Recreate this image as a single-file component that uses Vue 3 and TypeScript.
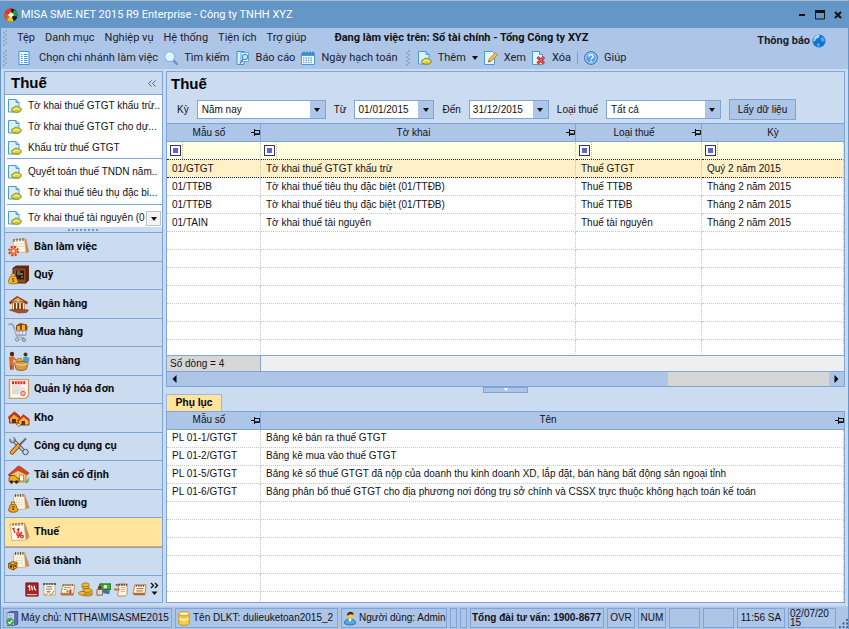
<script setup lang="ts">
import { ref } from 'vue'

interface NavItem { label: string; icon: string }
interface TaxRow { code: string; name: string; kind: string; period: string }
interface Appendix { code: string; name: string }

const menus = ['Tệp', 'Danh mục', 'Nghiệp vụ', 'Hệ thống', 'Tiện ích', 'Trợ giúp']

const taskGroups: string[][] = [
  ['Tờ khai thuế GTGT khấu trừ..', 'Tờ khai thuế GTGT cho dự...', 'Khấu trừ thuế GTGT'],
  ['Quyết toán thuế TNDN năm..', 'Tờ khai thuế tiêu thụ đặc bi...'],
  ['Tờ khai thuế tài nguyên (0'],
]

const navItems: NavItem[] = [
  { label: 'Bàn làm việc', icon: 'desk' },
  { label: 'Quỹ', icon: 'safe' },
  { label: 'Ngân hàng', icon: 'bank' },
  { label: 'Mua hàng', icon: 'cart' },
  { label: 'Bán hàng', icon: 'sell' },
  { label: 'Quản lý hóa đơn', icon: 'invoice' },
  { label: 'Kho', icon: 'stock' },
  { label: 'Công cụ dụng cụ', icon: 'tools' },
  { label: 'Tài sản cố định', icon: 'asset' },
  { label: 'Tiền lương', icon: 'salary' },
  { label: 'Thuế', icon: 'tax' },
  { label: 'Giá thành', icon: 'cost' },
]
const active = ref('Thuế')

const shortcuts = [
  { label: 'Sổ cái', icon: 'ledger' },
  { label: 'Hợp đồng', icon: 'contract' },
  { label: 'Ngân sách', icon: 'chart' },
  { label: 'Cổ đông', icon: 'coins' },
  { label: 'Kho bạc', icon: 'cash' },
  { label: 'Văn bản', icon: 'scroll' },
  { label: 'Tổng hợp', icon: 'card' },
]

const taxHeads = [
  { label: 'Mẫu số', pin: true },
  { label: 'Tờ khai', pin: true },
  { label: 'Loại thuế', pin: true },
  { label: 'Kỳ', pin: false },
]
const taxRows: TaxRow[] = [
  { code: '01/GTGT', name: 'Tờ khai thuế GTGT khấu trừ', kind: 'Thuế GTGT', period: 'Quý 2 năm 2015' },
  { code: '01/TTĐB', name: 'Tờ khai thuế tiêu thụ đặc biệt (01/TTĐB)', kind: 'Thuế TTĐB', period: 'Tháng 2 năm 2015' },
  { code: '01/TTĐB', name: 'Tờ khai thuế tiêu thụ đặc biệt (01/TTĐB)', kind: 'Thuế TTĐB', period: 'Tháng 2 năm 2015' },
  { code: '01/TAIN', name: 'Tờ khai thuế tài nguyên', kind: 'Thuế tài nguyên', period: 'Tháng 2 năm 2015' },
]
const appendices: Appendix[] = [
  { code: 'PL 01-1/GTGT', name: 'Bảng kê bán ra thuế GTGT' },
  { code: 'PL 01-2/GTGT', name: 'Bảng kê mua vào thuế GTGT' },
  { code: 'PL 01-5/GTGT', name: 'Bảng kê số thuế GTGT đã nộp của doanh thu kinh doanh XD, lắp đặt, bán hàng bất động sản ngoại tỉnh' },
  { code: 'PL 01-6/GTGT', name: 'Bảng phân bổ thuế GTGT cho địa phương nơi đóng trụ sở chính và CSSX trực thuộc không hạch toán kế toán' },
]
const selected = ref(0)
const period = ref('Năm nay')
const taxKind = ref('Tất cả')
const from = ref('01/01/2015')
const to = ref('31/12/2015')
</script>

<template>
  <div class="window">
    <svg class="sprite" aria-hidden="true">
      <symbol id="i-logo" viewBox="0 0 16 16">
        <circle cx="8" cy="8" r="7.5" fill="#1d1d1b" />
        <path d="M8 8 1 5A7.500 7.500 0 0 1 8 .5Z" fill="#e23b22" />
        <path d="M8 8 1 5A7.500 7.500 0 0 0 4 14.500Z" fill="#e9541f" />
        <path d="M8 8 3 13.800A7.500 7.500 0 0 0 11 15Z" fill="#f3c21b" />
        <path d="M12 2A7.500 7.500 0 0 1 15 10L8 8Z" fill="#2c9a3f" />
        <path d="m8 4.500 3.500 3.500L8 11.500 4.500 8Z" fill="#fff" />
      </symbol>
      <symbol id="i-page" viewBox="0 0 14 14">
        <path d="M.5.5H8l3 3v9.500H.5Z" fill="#dcf0fc" stroke="#4a9bd2" />
        <path d="M8 .5v3h3" fill="#8cc6ec" stroke="#4a9bd2" />
        <path d="M3.500 10.500c0-1.500 1.300-2 2.300-1.900C6 7 9.500 6.300 10.300 8.300c1.800-.2 3.200 1 3 2.400-.3 2-2.300 2.500-4.800 2.500-2.800 0-5-.7-5-2.700Z" fill="#d8cf3e" stroke="#85821c" stroke-width=".9" />
        <path d="M5.500 10.500c1.500-1 4-1.200 6-.5" stroke="#fbf6a0" stroke-width="1.200" fill="none" />
      </symbol>
      <symbol id="i-branch" viewBox="0 0 14 14">
        <path d="M2 .5h10v13H2Z" fill="#eef8fe" stroke="#3f94d2" />
        <path d="M4 3.500h1.500m1.500 0h3.500M4 5.500h1.500m1.500 0h3.500M4 7.500h1.500m1.500 0h3.500M4 9.500h1.500m1.500 0h3.500M4 11.500h1.500m1.500 0h3.500" stroke="#3f94d2" />
      </symbol>
      <symbol id="i-find" viewBox="0 0 14 14">
        <path d="m9 9 3.800 3.800" stroke="#7387c9" stroke-width="2.400" stroke-linecap="round" />
        <circle cx="5.700" cy="5.700" r="5" fill="#dff3fd" stroke="#7fbde6" stroke-width="1.200" />
        <path d="M3 5a2.800 2.800 0 0 1 3-2.400" stroke="#fff" fill="none" stroke-width="1.300" />
      </symbol>
      <symbol id="i-report" viewBox="0 0 14 14">
        <path d="M1 .5h7v13H1Z" fill="#d8effb" stroke="#3f94d2" />
        <path d="M5 1.500h7.500v9H5Z" fill="#eaf7fe" stroke="#5fabe0" />
        <circle cx="9" cy="6" r="2.800" fill="#bfe2f7" stroke="#3f7fc4" />
        <path d="m7 8-3 4.500" stroke="#6d7fc6" stroke-width="1.600" />
      </symbol>
      <symbol id="i-calendar" viewBox="0 0 14 14">
        <path d="M.5 2h13v11.500H.5Z" fill="#fff" stroke="#429ad6" />
        <path d="M.5 2h13v3H.5Z" fill="#429ad6" />
        <path d="M3 .5v3M6 .5v3M9 .5v3M12 .5v3" stroke="#1f6fb0" />
        <path d="M2 7h10M2 9.300h10M2 11.500h10" stroke="#57a9df" stroke-width="1.400" stroke-dasharray="1.500 1" />
      </symbol>
      <symbol id="i-edit" viewBox="0 0 14 14">
        <path d="M.5.5h8l2 2v11H.5Z" fill="#e7f5fd" stroke="#4a9bd2" />
        <path d="m4.500 11 .7-2.800 6-6.400 2.200 2-6.200 6.400Z" fill="#f6c244" stroke="#a8741c" stroke-width=".8" />
        <path d="m4.500 11 .4-1.600 1.200 1Z" fill="#444" />
      </symbol>
      <symbol id="i-delete" viewBox="0 0 14 14">
        <path d="M.5.5h7l3 3v10H.5Z" fill="#e7f5fd" stroke="#4a9bd2" />
        <path d="M7.500.5v3h3" fill="#a9d7f3" stroke="#4a9bd2" />
        <path d="m5.500 6 6.500 6.500M12 6l-6.500 6.500" stroke="#a42a2a" stroke-width="3" />
        <path d="m5.700 6.200 6 6M11.700 6.200l-6 6" stroke="#ea5a55" stroke-width="1.500" />
      </symbol>
      <symbol id="i-help" viewBox="0 0 14 14">
        <circle cx="7" cy="7" r="6.300" fill="#5b9fe8" stroke="#2b62b0" />
        <circle cx="7" cy="7" r="5.200" fill="none" stroke="#cfe5fa" stroke-width=".9" />
        <path d="M5 5.600c0-2.600 4.200-2.500 4.100 0C9 7 7.100 7 7.100 8.500M7.100 9.700V11" stroke="#fff" stroke-width="1.400" fill="none" />
      </symbol>
      <symbol id="i-globe" viewBox="0 0 14 14">
        <circle cx="7" cy="7" r="6.500" fill="#1670cf" />
        <path d="M2 3.500C4 1 7 .800 8 1.500L6.500 4 4 5 3 7.500 1 7Z" fill="#8fd3f8" />
        <path d="m9 3 3 .8 1 3L10 8 8.500 6ZM5 9l3 1-1 3-2-1Z" fill="#4ba6ea" />
        <path d="M3 3.500a5 5 0 0 1 4-2" stroke="#e4f6ff" fill="none" />
      </symbol>
      <symbol id="i-pin" viewBox="0 0 9 7">
        <path d="M0 3.500h3M3.500 0v7M4 1.500h4.500v4H4M4 4.800h4.500" stroke="#111" fill="none" />
      </symbol>

      <symbol id="i-desk" viewBox="0 0 22 20">
        <path d="m4 3 14-1.500L21 15l-3 1Z" fill="#c58b4b" />
        <path d="M5 3 16.500 2 18 15 6 16Z" fill="#fdf6e6" stroke="#c9a77a" stroke-width=".7" />
        <path d="M6 2v3M9 1.500v3M12 1.300v3M15 1v3" stroke="#5b4a3a" />
        <path d="M8 7h8M8 9.500h8" stroke="#d8c3a2" stroke-dasharray="1.500 1" />
        <circle cx="5.500" cy="14" r="4.200" fill="none" stroke="#e5351c" stroke-width="2.400" stroke-dasharray="2 1.300" />
        <circle cx="5.500" cy="14" r="3" fill="#f26a2c" />
        <circle cx="5.500" cy="14" r="1.500" fill="#ffe9b0" />
      </symbol>
      <symbol id="i-safe" viewBox="0 0 22 20">
        <path d="m5 3 3-2.500h13v15L18 18Z" fill="#5f2c17" />
        <path d="M5 3h13v15H5Z" fill="#8f4a28" stroke="#54230f" />
        <path d="M8 5.500h8v9H8Z" fill="#2b1a15" />
        <path d="M9 9h6M9 7h3m1 5h2" stroke="#c4b07d" />
        <path d="M2 11.500c1-1 5-1 6 0l2 5.500c0 2.500-10 2.500-10 0Z" fill="#eeb72a" stroke="#94630c" stroke-width=".7" />
        <path d="m3 9 4 0-1 2.500H4Z" fill="#f8d568" stroke="#94630c" stroke-width=".6" />
        <path d="M6.500 14c-2-1.500-3 .5-1.500 1s1.500 2-.8 1.500" stroke="#6b3a08" fill="none" />
      </symbol>
      <symbol id="i-bank" viewBox="0 0 22 20">
        <path d="M1 8 9 2l11 6-1 2.500L9.500 6 2 10.500Z" fill="#96401d" />
        <path d="m2.500 8 7-5 8.500 5Z" fill="#d99a5a" stroke="#7b3415" stroke-width=".7" />
        <path d="M4 9h13v7H4Z" fill="#c98549" />
        <path d="M5.500 9v7M8.500 9v7M12 9v7M15.500 9v7" stroke="#fff0cf" stroke-width="1.200" />
        <path d="M7 9v7M10.300 9v7M13.800 9v7" stroke="#6d3217" stroke-width="1.500" />
        <path d="m1.500 16 8-1 11 1-2 2.500-8 .5Z" fill="#a0522b" stroke="#6d3217" stroke-width=".6" />
        <circle cx="9.800" cy="6.400" r="1.200" fill="#f6d55b" />
      </symbol>
      <symbol id="i-cart" viewBox="0 0 22 20">
        <path d="M.5 3c2-2 4-1 5 1l3 9h9l2-9" fill="none" stroke="#8b97a8" stroke-width="1.400" />
        <path d="M6.500 7 8.500 12.500h9L19 7Z" fill="#e4e9f0" stroke="#a9b4c4" />
        <path d="M7.500 9.500h11M11 7v5M14.500 7v5" stroke="#a9b4c4" />
        <path d="M8 3.500 12 1l7 1.500v6H8Z" fill="#8a4b18" />
        <path d="M9 4h3v4H9ZM14 3h3v5h-3Z" fill="#f2b22c" />
        <path d="m8 14 8 2-7 2.500" fill="none" stroke="#9aa6b6" />
        <circle cx="9" cy="17.500" r="1.600" fill="#dde3ea" stroke="#6f7b8d" />
        <circle cx="16" cy="18" r="1.500" fill="#dde3ea" stroke="#6f7b8d" />
      </symbol>
      <symbol id="i-sell" viewBox="0 0 22 20">
        <circle cx="4" cy="3" r="2.200" fill="#4a2a18" />
        <path d="m1 6 4-1 4 4-1 1-3-1.500L6 14v5l-4-1Z" fill="#e0692b" />
        <path d="M3 14v5" stroke="#7f2d14" />
        <circle cx="17.500" cy="3.500" r="2" fill="#503220" />
        <path d="m15 6.500 4-1 2.500 2L20 13h-4l-4-2 3-1.500Z" fill="#4e9fc7" />
        <path d="M6.500 12c3-2.500 11-2 13.500 0l-1.500 6c-3 2-8 2-10.500 0Z" fill="#d79b45" stroke="#87541a" stroke-width=".8" />
        <path d="M7 12.500c3 2 10 2 13 0" stroke="#ffe0a0" fill="none" />
        <path d="m9 8 4-1 1 3.500H9Z" fill="#edb321" stroke="#8a5d12" stroke-width=".6" />
      </symbol>
      <symbol id="i-invoice" viewBox="0 0 22 20">
        <path d="M1.500.5h19v16l-3 3h-16Z" fill="#fffaf2" stroke="#d29b5e" stroke-width="1.400" />
        <path d="M4 3.800h14" stroke="#e1251b" stroke-width="3" stroke-dasharray="2 .8" />
        <path d="M4 7h9M4 9h13M4 11h13M4 13h8" stroke="#c2bfba" stroke-width=".8" />
        <path d="M4 10.500h7v5H4Z" fill="#dddbd8" />
        <circle cx="15" cy="14.500" r="2.300" fill="#f5b5a8" stroke="#df5b4b" />
      </symbol>
      <symbol id="i-stock" viewBox="0 0 22 20">
        <path d="m.5 9 6-5 5 4v7H1.500V9.500Z" fill="#e7a92e" stroke="#6b1d0d" stroke-width=".8" />
        <path d="m0 10 6-6 6 5-1 1.500-5-4-5 5Z" fill="#cc2c1b" />
        <path d="m10 12 5.500-5L21 11v6H11Z" fill="#f2bd43" stroke="#6b1d0d" stroke-width=".8" />
        <path d="m9 12.500 6.500-6 6 5-1 1.500-5-4-5.500 5Z" fill="#d9311e" />
        <path d="M4 11h4v4H4ZM13.500 13h3.500v4h-3.500Z" fill="#613314" />
        <path d="m8 16 3-1 2 2-2 1.500Z" fill="#fbdc6b" stroke="#614214" stroke-width=".6" />
      </symbol>
      <symbol id="i-tools" viewBox="0 0 22 20">
        <path d="m5 4 12 12" stroke="#495160" stroke-width="3.400" stroke-linecap="round" />
        <path d="m5 4 12 12" stroke="#ccd5df" stroke-width="1.700" />
        <circle cx="4.500" cy="4" r="2.700" fill="#aeb9c6" stroke="#495160" />
        <path d="m1 1.500 3.500 3L6 .5Z" fill="#ccdcf0" />
        <circle cx="17.500" cy="16" r="2.700" fill="#d2d9e1" stroke="#495160" />
        <circle cx="18" cy="16.500" r="1" fill="#ccdcf0" />
        <path d="m18 2.500-7 7" stroke="#5d6674" stroke-width="2" />
        <path d="m10.500 9.500-6.500 7" stroke="#7b3d0a" stroke-width="4.400" stroke-linecap="round" />
        <path d="m10.500 9.500-6.500 7" stroke="#efa52e" stroke-width="2.700" stroke-linecap="round" />
      </symbol>
      <symbol id="i-asset" viewBox="0 0 22 20">
        <path d="m0 10 8-7 2-2 3 1 8 6-2 2-8-4-8 6Z" fill="#d64321" stroke="#892510" stroke-width=".5" />
        <path d="m3 9.500 7-4 8 4V17H3Z" fill="#f4c47a" stroke="#995a25" stroke-width=".6" />
        <path d="M11.500 10h4v6h-4Z" fill="#fff2d8" stroke="#b06a2c" stroke-width=".7" />
        <path d="m1 13 2-2.500h4L9 13l2 .5v3H1Z" fill="#e8b128" stroke="#6b430e" stroke-width=".8" />
        <circle cx="3.500" cy="17" r="1.700" fill="#3a2b1d" />
        <circle cx="8.500" cy="17" r="1.700" fill="#3a2b1d" />
        <path d="m16 14 2 2.500 3.500-4.500-1 5-2.500 1.500Z" fill="#55b548" />
      </symbol>
      <symbol id="i-calbase" viewBox="0 0 22 20">
        <path d="m6 2.500 11-1L21.500 15 18 16Z" fill="#c98d50" />
        <path d="M6 2.500 16.500 2 17.500 16l-12 1Z" fill="#fdf4e3" stroke="#c9a070" stroke-width=".7" />
        <path d="M7.500 1v3M10 1v3M12.500 1v3M15 1v3" stroke="#5b4a3a" stroke-width=".9" />
        <path d="M8 7h7M8 9.500h7M8 12h7" stroke="#d9c9ad" stroke-dasharray="1.500 1" />
      </symbol>
      <symbol id="i-salary" viewBox="0 0 22 20">
        <use href="#i-calbase" />
        <path d="M2.500 11.500c1-1 4-1 5 0L10 17c0 3-9.500 3-9.500 0Z" fill="#eba921" stroke="#7c4d09" stroke-width=".8" />
        <path d="m3 9 4 0-1 2.500H4Z" fill="#f8d568" stroke="#7c4d09" stroke-width=".7" />
        <path d="M6.500 14c-2-1.500-3 .5-1.500 1s1.500 2-.8 1.500" stroke="#5e3208" fill="none" />
      </symbol>
      <symbol id="i-tax" viewBox="0 0 22 20">
        <path d="m4 2 13-1L21.500 15 18 18Z" fill="#c98d50" />
        <path d="M2 2.500 16 1.500 18 18l-14 .5Z" fill="#fff9ee" stroke="#cfa070" stroke-width=".8" />
        <path d="M5 1v3M8 1v3M11 1v3M14 .5v3" stroke="#5b4a3a" stroke-width=".9" />
        <path d="m4 7 3-1M5.500 7l1.500 4M9 7l2 2M11 6l-1 4" stroke="#e2231a" stroke-width="1.200" fill="none" />
        <path d="m9.500 16 4.500-6" stroke="#e2231a" stroke-width="1.400" />
        <circle cx="10" cy="12" r="1.300" fill="none" stroke="#e2231a" stroke-width="1.200" />
        <circle cx="14" cy="14.500" r="1.300" fill="none" stroke="#e2231a" stroke-width="1.200" />
      </symbol>
      <symbol id="i-cost" viewBox="0 0 22 20">
        <use href="#i-calbase" />
        <path d="m.5 12.500 4-2 4.500 1v5L5.500 19l-5-2Z" fill="#e9a922" stroke="#70430a" stroke-width=".8" />
        <path d="m.5 12.500 5 1.500L9 11.500M5.500 14v5" stroke="#70430a" stroke-width=".8" fill="none" />
        <circle cx="3" cy="15.500" r="1.300" fill="#4b2b0b" />
        <circle cx="7.300" cy="15" r="1" fill="#4b2b0b" />
      </symbol>

      <symbol id="i-ledger" viewBox="0 0 16 16">
        <path d="M2 1h13v14H2Z" fill="#ad2424" stroke="#6b1010" />
        <path d="M3 13.500h11" stroke="#f5e0d0" />
        <path d="m4 5 2-1v5m2-5 1 5m2-5v3l2 2" stroke="#fff" stroke-width="1.300" fill="none" />
      </symbol>
      <symbol id="i-contract" viewBox="0 0 16 16">
        <path d="M2 2h12v12H2Z" fill="#fdf8ef" stroke="#c7a378" />
        <path d="M1 2h14" stroke="#333" stroke-width="1.600" stroke-dasharray="2 1" />
        <path d="M5 5h6M4 7.500h7M5 10h4" stroke="#7a7166" />
        <path d="m3 14 4-3 3 3 3-5" stroke="#ca7b46" fill="none" />
      </symbol>
      <symbol id="i-chart" viewBox="0 0 16 16">
        <path d="M3 3h12.500l-1 9H1Z" fill="#fbf0dc" stroke="#c48b52" />
        <path d="M3 3.500h12" stroke="#5a4636" stroke-width="1.500" stroke-dasharray="1 1" />
        <path d="M0 12h14.500v2.500H1.500Z" fill="#b8703c" />
        <path d="M8 11V9" stroke="#39a24a" stroke-width="2" />
        <path d="M11 12V8" stroke="#dc2a1e" stroke-width="2" />
        <path d="M4 8h3M4 6h8" stroke="#b5875a" />
      </symbol>
      <symbol id="i-coins" viewBox="0 0 16 16">
        <g fill="#f0bb36" stroke="#95620f" stroke-width=".8">
          <ellipse cx="10" cy="13" rx="5.500" ry="2" /><ellipse cx="10" cy="11" rx="5.500" ry="2" /><ellipse cx="10" cy="9" rx="5" ry="2" />
          <ellipse cx="8" cy="5" rx="4" ry="2" /><ellipse cx="8" cy="3" rx="4" ry="2" /><ellipse cx="4.500" cy="12" rx="4" ry="2" />
        </g>
      </symbol>
      <symbol id="i-cash" viewBox="0 0 16 16">
        <path d="M4 2h12v6H4Z" fill="#49a43d" stroke="#21681d" />
        <circle cx="10" cy="5" r="2" fill="#d7f0b8" />
        <path d="m7 8 8 1-1 4-6-1Z" fill="#3c6fb7" />
        <circle cx="4" cy="6" r="2" fill="#5d3a22" />
        <path d="M1 8h6v6H1Z" fill="#ead9bd" stroke="#7b6149" />
      </symbol>
      <symbol id="i-scroll" viewBox="0 0 16 16">
        <path d="M5 2h9v11l-2 2H4Z" fill="#fdf6e8" stroke="#ba8550" />
        <path d="M2 3h12" stroke="#64503c" stroke-width="2" stroke-dasharray="2 .7" />
        <path d="M7 6h5M7 8h5M7 10h5" stroke="#bdae97" />
        <path d="M0 7h6v2H0Z" fill="#c47739" />
      </symbol>
      <symbol id="i-card" viewBox="0 0 16 16">
        <path d="M3 3h12l-1 9H1Z" fill="#fcefd7" stroke="#b67f48" />
        <path d="M4 4h10" stroke="#544133" stroke-width="1.500" stroke-dasharray="1.500 1" />
        <path d="M1 12h13v2H2Z" fill="#ac6333" />
        <path d="M5 7h7M4.500 9.500h7" stroke="#a5662f" />
      </symbol>

      <symbol id="i-server" viewBox="0 0 14 16">
        <path d="m2 2 4-1.500h7V14l-5 1.500H2Z" fill="#5b6fb0" stroke="#3f4f8c" />
        <path d="M2 2.500h7v12.500H2Z" fill="#e2e6f5" />
        <path d="M3 4.500h5M3 6.500h5" stroke="#8a96c9" />
        <circle cx="5" cy="11.500" r="4" fill="#37a93c" />
        <path d="m3 11.500 1.500 1.800L7.300 10" stroke="#fff" stroke-width="1.300" fill="none" />
      </symbol>
      <symbol id="i-database" viewBox="0 0 14 16">
        <path d="M1.500 3v10c0 3 11 3 11 0V3Z" fill="#f5cf4a" stroke="#c8901a" />
        <ellipse cx="7" cy="3" rx="5.500" ry="2.200" fill="#fff2ad" stroke="#c8901a" />
        <path d="M2 8c2 2 8 2 10 0" stroke="#fff6c8" stroke-width="1.500" fill="none" />
      </symbol>
      <symbol id="i-user" viewBox="0 0 14 16">
        <path d="M1 13c0-3 3-5 6-5s6 2 6 5c-1 2.500-11 2.500-12 0Z" fill="#4fa8e6" stroke="#2873b3" />
        <path d="m5 8 2 4 2-4Z" fill="#fff" />
        <circle cx="7.500" cy="5" r="3.500" fill="#f6c83c" />
        <path d="M4 5c-1-5 7-6 7-1L7 3.500Z" fill="#35302c" />
      </symbol>
    </svg>

    <header class="titlebar">
      <svg class="logo"><use href="#i-logo" /></svg>
      <h1>MISA SME.NET 2015 R9 Enterprise - Công ty TNHH XYZ</h1>
      <div class="winbtns">
        <button aria-label="Thu nhỏ"><svg viewBox="0 0 10 10"><path d="M2 5h6" stroke="#111" stroke-width="2" /></svg></button>
        <button aria-label="Phóng to"><svg viewBox="0 0 10 10"><path d="M.5 1v8h9V1Z" fill="none" stroke="#111" /><path d="M0 1.500h10" stroke="#111" stroke-width="3" /></svg></button>
        <button aria-label="Đóng"><svg viewBox="0 0 10 10"><path d="m2 2 6 6M8 2 2 8" stroke="#111" stroke-width="2" /></svg></button>
      </div>
    </header>

    <div class="bars">
      <div class="barrows">
        <nav class="menubar">
          <span class="grip"></span>
          <button v-for="m in menus" :key="m">{{ m }}</button>
          <strong>Đang làm việc trên: Sổ tài chính - Tổng Công ty XYZ</strong>
        </nav>
        <div class="toolbar">
          <span class="grip"></span>
          <button class="wide"><svg><use href="#i-branch" /></svg>Chọn chi nhánh làm việc</button>
          <button><svg><use href="#i-find" /></svg>Tìm kiếm</button>
          <button><svg><use href="#i-report" /></svg>Báo cáo</button>
          <button><svg><use href="#i-calendar" /></svg>Ngày hạch toán</button>
          <span class="grip second"></span>
          <button><svg><use href="#i-page" /></svg>Thêm<i class="caret"></i></button>
          <button><svg><use href="#i-edit" /></svg>Xem</button>
          <button><svg><use href="#i-delete" /></svg>Xóa</button>
          <span class="sep"></span>
          <button><svg><use href="#i-help" /></svg>Giúp</button>
        </div>
      </div>
      <button class="notice">Thông báo<svg><use href="#i-globe" /></svg></button>
    </div>

    <div class="workspace">
      <aside class="sidebar">
        <div class="sidehead">
          <h2>Thuế</h2>
          <button aria-label="Thu gọn"><svg viewBox="0 0 8 7"><path d="M3.500.5.500 3.500l3 3M7.500.5l-3 3 3 3" fill="none" stroke="#3f66a3" /></svg></button>
        </div>
        <div class="tasks">
          <ul v-for="(group, g) in taskGroups" :key="g">
            <li v-for="t in group" :key="t"><a href="#"><svg><use href="#i-page" /></svg><span>{{ t }}</span></a></li>
          </ul>
          <button class="more" aria-label="Xem thêm"><i class="caret"></i></button>
        </div>
        <div class="splitter"><span></span></div>
        <nav class="modules">
          <button v-for="n in navItems" :key="n.label" :class="{ active: n.label === active }" @click="active = n.label">
            <svg><use :href="'#i-' + n.icon" /></svg>{{ n.label }}
          </button>
        </nav>
        <div class="shortcuts">
          <button v-for="s in shortcuts" :key="s.icon" :aria-label="s.label"><svg><use :href="'#i-' + s.icon" /></svg></button>
          <button class="expand" aria-label="Thêm nút">
            <svg viewBox="0 0 9 14"><path d="m1 1 2.500 2.500L1 6M5 1l2.500 2.500L5 6" fill="none" stroke="#111" stroke-width="1.400" /><path d="M1.500 9.500h6L4.500 13Z" fill="#111" /></svg>
          </button>
        </div>
      </aside>

      <main class="content">
        <section class="upper">
          <h2>Thuế</h2>
          <form class="filters" @submit.prevent>
            <label for="period">Kỳ</label>
            <span class="combo period"><select id="period" v-model="period"><option>Năm nay</option></select><i class="caret"></i></span>
            <label for="from">Từ</label>
            <span class="combo date"><input id="from" v-model="from" type="text" /><button type="button" aria-label="Chọn ngày bắt đầu"><i class="caret"></i></button></span>
            <label for="to">Đến</label>
            <span class="combo date"><input id="to" v-model="to" type="text" /><button type="button" aria-label="Chọn ngày kết thúc"><i class="caret"></i></button></span>
            <label for="kind">Loại thuế</label>
            <span class="combo kind"><select id="kind" v-model="taxKind"><option>Tất cả</option></select><i class="caret"></i></span>
            <button class="load">Lấy dữ liệu</button>
          </form>
          <div class="gridbox">
            <table>
              <colgroup><col class="c-code" /><col /><col class="c-kind" /><col class="c-period" /></colgroup>
              <thead>
                <tr>
                  <th v-for="h in taxHeads" :key="h.label">
                    <div><span>{{ h.label }}</span><svg v-if="h.pin"><use href="#i-pin" /></svg></div>
                  </th>
                </tr>
              </thead>
              <tbody>
                <tr class="filterrow"><td v-for="h in taxHeads" :key="h.label"><span><button :aria-label="'Lọc ' + h.label"></button></span></td></tr>
                <tr v-for="(r, i) in taxRows" :key="i" :class="{ selected: i === selected }" @click="selected = i">
                  <td>{{ r.code }}</td><td>{{ r.name }}</td><td>{{ r.kind }}</td><td>{{ r.period }}</td>
                </tr>
                <tr v-for="n in 40" :key="'e' + n"><td></td><td></td><td></td><td></td></tr>
              </tbody>
            </table>
          </div>
          <div class="summary"><span>Số dòng = 4</span></div>
          <div class="scroll">
            <button aria-label="Cuộn trái"><svg viewBox="0 0 5 8"><path d="M4.500 0v8L.5 4Z" /></svg></button>
            <span class="thumb"></span><span class="track"></span>
            <button aria-label="Cuộn phải"><svg viewBox="0 0 5 8"><path d="M.5 0v8l4-4Z" /></svg></button>
          </div>
        </section>
        <div class="divider"><button aria-label="Ẩn phụ lục"></button></div>
        <section class="lower">
          <div class="tabs"><button>Phụ lục</button></div>
          <div class="gridbox">
            <table>
              <colgroup><col class="c-code" /><col /></colgroup>
              <thead>
                <tr>
                  <th><div><span>Mẫu số</span><svg><use href="#i-pin" /></svg></div></th>
                  <th><div><span>Tên</span><svg><use href="#i-pin" /></svg></div></th>
                </tr>
              </thead>
              <tbody>
                <tr v-for="a in appendices" :key="a.code"><td>{{ a.code }}</td><td>{{ a.name }}</td></tr>
                <tr v-for="n in 40" :key="'e' + n"><td></td><td></td></tr>
              </tbody>
            </table>
          </div>
        </section>
      </main>
    </div>

    <footer class="status">
      <span class="s-server"><svg><use href="#i-server" /></svg>Máy chủ: NTTHA\MISASME2015</span>
      <span class="s-db"><svg><use href="#i-database" /></svg>Tên DLKT: dulieuketoan2015_2</span>
      <span class="s-user"><svg><use href="#i-user" /></svg>Người dùng: Admin</span>
      <span class="s-slim"></span>
      <span class="s-slim"></span>
      <strong class="s-call">Tổng đài tư vấn: 1900-8677</strong>
      <span class="s-key">OVR</span>
      <span class="s-key">NUM</span>
      <span class="s-blank"></span>
      <span class="s-blank"></span>
      <span class="s-time">11:56 SA</span>
      <span class="s-date">02/07/20<br />15</span>
      <svg class="sizegrip" viewBox="0 0 10 10"><path d="M8 1h2M8 5h2M8 9h2M4 5h2M4 9h2M0 9h2" stroke="#33558c" stroke-width="2" /></svg>
    </footer>
  </div>
</template>

<style>
body { background: #6496c8; }
</style>

<style scoped>
* { box-sizing: border-box; }
button, input, select { font: inherit; color: inherit; border: 0; margin: 0; padding: 0; background: none; border-radius: 0; }
h1, h2, ul { margin: 0; padding: 0; font-weight: 400; }
ul { list-style: none; }
svg { flex: none; display: block; }
.sprite { position: absolute; width: 0; height: 0; }
.caret { display: block; flex: none; width: 0; height: 0; border: 3px solid transparent; border-top: 4px solid #111; border-bottom: 0; }
.window {
  height: 100vh; min-height: 560px; display: flex; flex-direction: column;
  font: 10px/14px "Liberation Sans", Arial, sans-serif; color: #111118;
  background: #ccdcf0; border-top: 1px solid #a9bccb; border-left: 1px solid #6496c8; border-right: 1px solid #6496c8;
}

.titlebar { display: flex; align-items: center; height: 27px; padding: 0 4px 0 3px; gap: 3px; background: #6496c8; color: #fff; flex: none; }
.logo { width: 14px; height: 14px; }
.titlebar h1 { flex: 1; font: 11px/16px Roboto, sans-serif; }
.winbtns { display: flex; gap: 6px; }
.winbtns button { width: 12px; height: 12px; display: grid; place-items: center; }
.winbtns svg { width: 10px; height: 10px; }

.bars { flex: none; display: flex; justify-content: space-between; background: #adc5e7; height: 41px; font: 11px/14px Roboto, sans-serif; color: #1d1d2b; }
.menubar, .toolbar { display: flex; align-items: center; height: 20px; white-space: nowrap; }
.menubar { gap: 10px; }
.menubar strong { padding-left: 18px; color: #111; }
.toolbar { gap: 6px; }
.toolbar button { display: flex; align-items: center; gap: 6px; }
.toolbar .wide { gap: 8px; padding-left: 4px; }
.toolbar svg { width: 14px; height: 14px; }
.grip { width: 4px; height: 16px; margin-left: 2px; background: repeating-conic-gradient(#93abc9 0 25%, #adc5e7 0 50%) 0 0 / 4px 4px; }
.grip.second { margin-right: 2px; }
.sep { width: 1px; height: 12px; background: #7aa4d8; }
.notice { display: flex; align-items: center; gap: 2px; padding-right: 22px; height: 26px; font-weight: 700; }
.notice svg { width: 14px; height: 14px; }

.workspace { flex: 1; min-height: 0; display: flex; gap: 3px; padding: 2px 3px 3px; }
.sidebar { flex: none; width: 159px; display: flex; flex-direction: column; border: 1px solid #7fa5d6; }
.sidehead { flex: none; display: flex; justify-content: space-between; align-items: center; height: 23px; padding: 0 6px; border-bottom: 1px solid #7fa5d6; }
h2 { font: 700 15px/20px "Liberation Sans", Arial, sans-serif; color: #000; }
.sidehead svg { width: 8px; height: 7px; }
.tasks { flex: none; height: 132px; overflow: hidden; position: relative; background: #fff; }
.tasks ul { padding: 0 3px; }
.tasks ul + ul { border-top: 1px solid #7fa5d6; margin: 0 0 0 2px; padding: 2px 2px 1px 1px; }
.tasks a { display: flex; align-items: center; gap: 6px; height: 21px; color: inherit; text-decoration: none; white-space: nowrap; }
.tasks svg { width: 14px; height: 14px; }
.more { position: absolute; right: 1px; bottom: 1px; width: 15px; height: 15px; background: #f4f4f4; border: 1px solid #b9c3d0; display: grid; place-items: center; }
.splitter { flex: none; height: 5px; display: grid; place-items: center; }
.splitter span { width: 32px; height: 2px; background: repeating-linear-gradient(90deg, #6f97cf 0 2px, transparent 2px 4px); }
.modules { flex: 1; min-height: 0; display: flex; flex-direction: column; }
.modules button { flex: 1; min-height: 0; display: flex; align-items: center; gap: 4px; padding-left: 3px; border-top: 1px solid #7fa5d6; font: 700 11px/16px Roboto, sans-serif; color: #0c0c12; text-align: left; }
.modules button.active { background: #ffe59c; border-bottom: 1px solid #e8a55c; }
.modules svg { width: 22px; height: 20px; }
.shortcuts { flex: none; height: 27px; display: flex; align-items: center; justify-content: flex-end; gap: 3px; padding-right: 3px; border-top: 1px solid #7fa5d6; }
.shortcuts svg { width: 15px; height: 15px; }
.shortcuts .expand svg { width: 9px; height: 14px; }

.content { flex: 1; min-width: 0; display: flex; flex-direction: column; }
.upper, .lower { min-height: 0; display: flex; flex-direction: column; border: 1px solid #7fa5d6; }
.upper { flex: 316 1 0; }
.upper h2 { flex: none; padding: 2px 4px 0; height: 24px; }
.filters { flex: none; display: flex; align-items: center; gap: 8px; height: 27px; padding-left: 10px; white-space: nowrap; }
.combo { display: flex; align-items: center; height: 19px; border: 1px solid #7fa5d6; background: #fff; position: relative; }
.combo select { appearance: none; width: 100%; height: 100%; padding-left: 4px; background: linear-gradient(#adc5e7, #adc5e7) right / 15px 100% no-repeat; }
.combo > .caret { position: absolute; right: 5px; top: 7px; pointer-events: none; }
.combo input { flex: 1; min-width: 0; padding-left: 3px; }
.combo button { width: 15px; height: 100%; background: #adc5e7; display: grid; place-items: center; }
.combo.period { width: 129px; }
.combo.date { width: 80px; }
.combo.kind { width: 115px; }
.load { width: 67px; height: 21px; background: #adc5e7; border: 1px solid #7fa5d6; }

.gridbox { flex: 1; min-height: 0; overflow: hidden; background: #fff; }
table { width: 100%; table-layout: fixed; border-collapse: separate; border-spacing: 0; }
.c-code { width: 94px; }
.c-kind { width: 126px; }
.c-period { width: 142px; }
th { height: 19px; padding: 0; font-weight: 400; background: #adc5e7; border: solid #7fa5d6; border-width: 1px 1px 1px 0; }
th:last-child { border-right: 0; }
th div { display: flex; align-items: center; }
th span { flex: 1; text-align: center; }
th svg { width: 9px; height: 7px; }
td { height: 18px; padding: 0 5px; border: dotted #c6c6c6; border-width: 0 1px 1px 0; white-space: nowrap; overflow: hidden; line-height: 14px; }
.filterrow td { padding: 0 3px; background: #ffffe1; border-bottom-color: #222; }
.filterrow span { display: flex; align-items: center; width: 13px; height: 17px; border-right: 1px dotted #b5b5a0; }
.filterrow button { width: 11px; height: 11px; border: 1px solid #33356f; background: #5d62d6; box-shadow: inset 0 0 0 2px #fff; }
tr.selected td { background: #fff0c8; border-bottom-color: #222; }
.summary { flex: none; height: 16px; display: flex; background: #efefef; border-top: 1px solid #7fa5d6; line-height: 15px; }
.summary span { width: 94px; padding-left: 3px; background: #d7d7d7; border-right: 1px solid #7fa5d6; }
.scroll { flex: none; display: flex; height: 15px; background: #adc5e7; border-top: 1px solid #7fa5d6; }
.scroll button { width: 15px; display: grid; place-items: center; }
.scroll svg { width: 5px; height: 8px; }
.thumb { flex: 486; }
.track { flex: 161; background: #d6d6d6; }
.divider { flex: none; height: 7px; display: flex; justify-content: center; }
.divider button { width: 45px; height: 6px; border: 1px solid #7fa5d6; background: #adc5e7; display: grid; place-items: center; }
.divider button::after { content: ""; border: 2px solid transparent; border-top: 3px solid #fff; border-bottom: 0; }
.lower { flex: 210 1 0; border-top: 0; border-left: 0; border-right: 0; }
.tabs { flex: none; height: 17px; }
.tabs button { width: 56px; height: 17px; background: #ffe59c; border: 1px solid #9dbbe2; border-bottom: 0; font: 700 11px/14px Roboto, sans-serif; color: #111; }
.lower .gridbox { border: solid #7fa5d6; border-width: 0 1px; }

.status { flex: none; display: flex; gap: 3px; height: 23px; padding: 1px 1px 1px 2px; background: #adc5e7; border-top: 1px solid #b9cee9; white-space: nowrap; }
.status > span, .status > strong { height: 20px; display: flex; align-items: center; gap: 2px; padding: 0 1px; border: 1px solid #7fa5d6; overflow: hidden; }
.status svg { width: 14px; height: 15px; }
.status .s-server { flex: 0 0 169px; }
.status .s-db { flex: 0 0 163px; }
.status .s-user { flex: 0 0 106px; }
.status .s-slim { flex: 0 0 7px; }
.status .s-call { flex: 0 0 134px; }
.status .s-key { flex: 0 0 28px; justify-content: center; }
.status .s-blank { flex: 0 0 31px; }
.status .s-time { flex: 0 0 48px; justify-content: center; }
.status .s-date { flex: 0 0 48px; display: block; line-height: 9px; }
.status .sizegrip { width: 9px; height: 9px; margin: auto 0 0 auto; }
</style>
